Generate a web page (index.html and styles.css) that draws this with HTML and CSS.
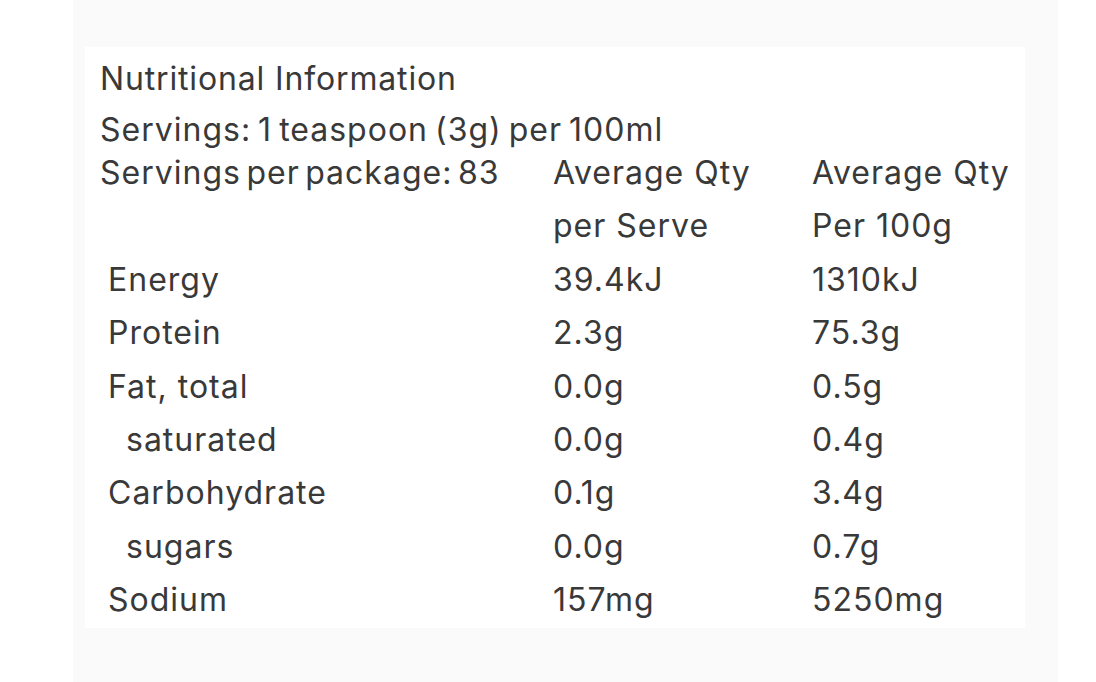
FILE: index.html
```html
<!DOCTYPE html>
<html lang="en">
<head>
<meta charset="utf-8">
<title>Nutritional Information</title>
<link rel="stylesheet" href="styles.css">
</head>
<body>
<div class="panel">
  <div class="card">
    <div class="title">Nutritional Information</div>
    <div class="servings tight">Servings: 1 teaspoon (3g) per 100ml</div>
    <div class="table">
      <div class="cell tighter">Servings per package: 83</div>
      <div class="cell">Average Qty</div>
      <div class="cell">Average Qty</div>

      <div class="cell"></div>
      <div class="cell">per Serve</div>
      <div class="cell">Per 100g</div>

      <div class="cell label">Energy</div>
      <div class="cell">39.4kJ</div>
      <div class="cell">1310kJ</div>

      <div class="cell label">Protein</div>
      <div class="cell">2.3g</div>
      <div class="cell">75.3g</div>

      <div class="cell label">Fat, total</div>
      <div class="cell">0.0g</div>
      <div class="cell">0.5g</div>

      <div class="cell label sub">saturated</div>
      <div class="cell">0.0g</div>
      <div class="cell">0.4g</div>

      <div class="cell label">Carbohydrate</div>
      <div class="cell">0.1g</div>
      <div class="cell">3.4g</div>

      <div class="cell label sub">sugars</div>
      <div class="cell">0.0g</div>
      <div class="cell">0.7g</div>

      <div class="cell label">Sodium</div>
      <div class="cell">157mg</div>
      <div class="cell">5250mg</div>
    </div>
  </div>
</div>
</body>
</html>
```
FILE: styles.css
```css
html, body {
  margin: 0;
  padding: 0;
  background: #ffffff;
}
body {
  font-family: Inter, "Noto Sans", sans-serif;
  color: #393939;
  font-size: 32px;
  line-height: 36px;
  letter-spacing: 1px;
}
.panel {
  margin-left: 73px;
  width: 985px;
  height: 682px;
  background: #fafafa;
  padding: 47px 0 0 12px;
  box-sizing: border-box;
}
.card {
  width: 940px;
  height: 581px;
  background: #ffffff;
  padding: 14px 0 0 15px;
  box-sizing: border-box;
}
.title {
  height: 36px;
  letter-spacing: 0.85px;
}
.servings {
  margin-top: 15px;
  height: 36px;
}
.tight {
  word-spacing: -3px;
}
.tighter {
  word-spacing: -4.5px;
}
.table {
  margin-top: 7px;
  display: grid;
  grid-template-columns: 453px 259px 1fr;
  row-gap: 17.4px;
}
.cell {
  height: 36px;
  white-space: nowrap;
}
.label {
  padding-left: 8px;
}
.label.sub {
  padding-left: 26px;
}
```
